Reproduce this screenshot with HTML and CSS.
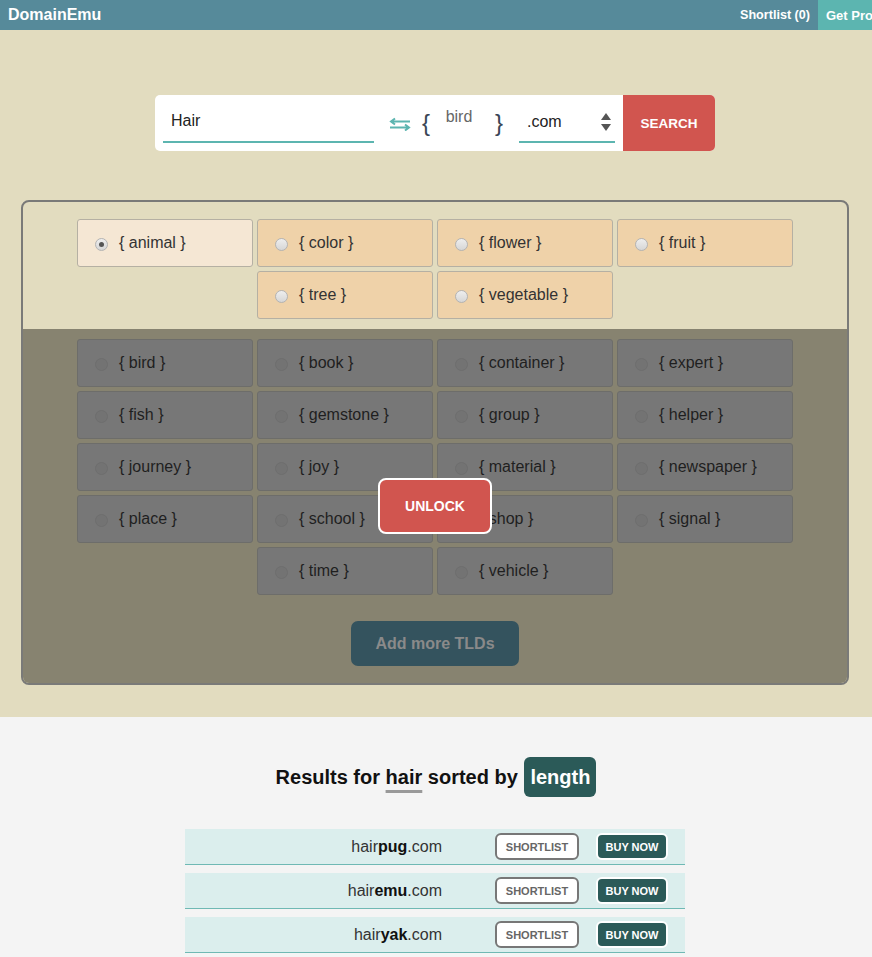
FILE: index.html
```html
<!DOCTYPE html>
<html>
<head>
    <meta charset="UTF-8">
    <link rel="stylesheet" href="styles.css">
</head>
<body>
    <div id="header">
        <div class="brand">DomainEmu</div>
        <div class="nav">
            <span class="nav-link">Shortlist (0)</span>
            <span class="pro">Get Pro</span>
        </div>
    </div>

    <div id="search-area">
        <div class="search">
            <div class="term">Hair</div>
            <div class="swap">
                <svg width="22" height="14" viewBox="0 0 22 14">
                    <path d="M21 4.5H2M6 1.5L2 4.5L6 7.5" fill="none" stroke="#5cb5b0" stroke-width="2"/>
                    <path d="M1 10.5H20M16 7.5L20 10.5L16 13.5" fill="none" stroke="#5cb5b0" stroke-width="2"/>
                </svg>
            </div>
            <div class="brace">{</div>
            <div class="word">bird</div>
            <div class="brace">}</div>
            <div class="tld">
                <span>.com</span>
                <svg width="12" height="20" viewBox="0 0 12 20">
                    <path d="M6 1L11 8H1Z" fill="#555"/>
                    <path d="M6 19L11 12H1Z" fill="#555"/>
                </svg>
            </div>
            <div class="search-btn">SEARCH</div>
        </div>

        <div class="panel">
            <div class="free">
                <div class="cats">
                    <div class="cat selected"><span class="radio checked"></span>{ animal }</div>
                    <div class="cat"><span class="radio"></span>{ color }</div>
                    <div class="cat"><span class="radio"></span>{ flower }</div>
                    <div class="cat"><span class="radio"></span>{ fruit }</div>
                    <div class="cat"><span class="radio"></span>{ tree }</div>
                    <div class="cat"><span class="radio"></span>{ vegetable }</div>
                </div>
            </div>
            <div class="locked">
                <div class="cats">
                    <div class="cat"><span class="radio"></span>{ bird }</div>
                    <div class="cat"><span class="radio"></span>{ book }</div>
                    <div class="cat"><span class="radio"></span>{ container }</div>
                    <div class="cat"><span class="radio"></span>{ expert }</div>
                    <div class="cat"><span class="radio"></span>{ fish }</div>
                    <div class="cat"><span class="radio"></span>{ gemstone }</div>
                    <div class="cat"><span class="radio"></span>{ group }</div>
                    <div class="cat"><span class="radio"></span>{ helper }</div>
                    <div class="cat"><span class="radio"></span>{ journey }</div>
                    <div class="cat"><span class="radio"></span>{ joy }</div>
                    <div class="cat"><span class="radio"></span>{ material }</div>
                    <div class="cat"><span class="radio"></span>{ newspaper }</div>
                    <div class="cat"><span class="radio"></span>{ place }</div>
                    <div class="cat"><span class="radio"></span>{ school }</div>
                    <div class="cat"><span class="radio"></span>{ shop }</div>
                    <div class="cat"><span class="radio"></span>{ signal }</div>
                    <div class="cat"><span class="radio"></span>{ time }</div>
                    <div class="cat"><span class="radio"></span>{ vehicle }</div>
                </div>
                <div class="more-btn">Add more TLDs</div>
                <div class="unlock">UNLOCK</div>
            </div>
        </div>
    </div>

    <div id="results">
        <h2>Results for <span class="q">hair</span> sorted by <span class="sort">length</span></h2>
        <div class="row">
            <div class="domain">hair<b>pug</b>.com</div>
            <div class="shortlist-btn">SHORTLIST</div>
            <div class="buy-btn">BUY NOW</div>
        </div>
        <div class="row">
            <div class="domain">hair<b>emu</b>.com</div>
            <div class="shortlist-btn">SHORTLIST</div>
            <div class="buy-btn">BUY NOW</div>
        </div>
        <div class="row">
            <div class="domain">hair<b>yak</b>.com</div>
            <div class="shortlist-btn">SHORTLIST</div>
            <div class="buy-btn">BUY NOW</div>
        </div>
    </div>
</body>
</html>
```

FILE: styles.css
```css
body {
    margin: 0;
    font-family: "Liberation Sans", Arial, sans-serif;
    background-color: #f4f4f4;
    color: #333;
}
#header {
    height: 30px;
    background-color: #568a9a;
    display: flex;
    justify-content: space-between;
    align-items: center;
    overflow: hidden;
    color: white;
    font-weight: bold;
}
.brand {
    font-size: 16px;
    padding-left: 8px;
}
.nav {
    display: flex;
    align-items: center;
    height: 100%;
    font-size: 12.6px;
}
.nav-link {
    margin-right: 8px;
}
.pro {
    background-color: #5cb5b0;
    height: 100%;
    display: flex;
    align-items: center;
    padding-left: 8px;
    width: 46px;
    white-space: nowrap;
    font-size: 13px;
}
#search-area {
    background-color: #e2dcbf;
    padding: 65px 23px 32px 21px;
}
.search {
    width: 560px;
    height: 56px;
    margin: 0 auto 49px;
    background: white;
    border-radius: 5px;
    display: flex;
    align-items: stretch;
}
.term {
    width: 203px;
    margin: 0 0 8px 8px;
    padding: 0 0 11px 8px;
    border-bottom: 2px solid #5cb5b0;
    display: flex;
    align-items: flex-end;
    font-size: 16px;
    color: #222;
}
.swap {
    margin-left: 15px;
    display: flex;
    align-items: center;
    padding-top: 2px;
}
.brace {
    font-size: 24px;
    color: #3a4656;
    display: flex;
    align-items: center;
    margin-left: 11px;
    padding-bottom: 1px;
}
.word {
    width: 50px;
    text-align: center;
    font-size: 16px;
    color: #666;
    padding-top: 13px;
    margin-left: 4px;
}
.tld {
    width: 96px;
    box-sizing: border-box;
    margin: 0 8px 8px 16px;
    padding: 0 3px 9px 8px;
    border-bottom: 2px solid #5cb5b0;
    display: flex;
    align-items: flex-end;
    justify-content: space-between;
    font-size: 16px;
    color: #222;
}
.tld span {
    padding-bottom: 1px;
}
.search-btn {
    width: 92px;
    background-color: #d1554f;
    color: white;
    font-weight: bold;
    font-size: 13.5px;
    display: flex;
    justify-content: center;
    align-items: center;
    border-radius: 0 5px 5px 0;
    margin-left: auto;
}
.panel {
    border: 2px solid #7a7a78;
    border-radius: 8px;
    overflow: hidden;
}
.free {
    padding: 17px 0 10px;
}
.locked {
    background-color: #878370;
    padding: 10px 0 17px;
    position: relative;
    display: flex;
    flex-direction: column;
    align-items: center;
}
.cats {
    width: 716px;
    margin: 0 auto;
    display: flex;
    flex-wrap: wrap;
    justify-content: center;
    gap: 4px;
}
.cat {
    width: 176px;
    height: 48px;
    box-sizing: border-box;
    border: 1px solid #b5b0a3;
    border-radius: 3px;
    background-color: #efd2a9;
    display: flex;
    align-items: center;
    padding-left: 17px;
    font-size: 16px;
    color: #333;
}
.cat.selected {
    background-color: #f5e7d4;
}
.radio {
    width: 11px;
    height: 11px;
    border-radius: 50%;
    border: 1px solid #b3b3b3;
    background: linear-gradient(#eee, #d6d6d6);
    margin-right: 11px;
    position: relative;
    top: 1px;
}
.radio.checked::after {
    content: "";
    position: absolute;
    left: 3px;
    top: 3px;
    width: 5px;
    height: 5px;
    border-radius: 50%;
    background: #555;
}
.locked .cat {
    background-color: #777777;
    border-color: #6d6d6a;
    color: #1f1f1f;
}
.locked .radio {
    background: #737373;
    border-color: #6e6e6e;
}
.more-btn {
    margin-top: 26px;
    width: 168px;
    height: 45px;
    border-radius: 7px;
    background-color: #34535e;
    color: #8a8a8a;
    font-weight: bold;
    font-size: 16px;
    display: flex;
    justify-content: center;
    align-items: center;
}
.unlock {
    position: absolute;
    left: 50%;
    top: 50%;
    transform: translate(-50%, -50%);
    width: 110px;
    height: 52px;
    border: 2px solid white;
    border-radius: 8px;
    background-color: #d1554f;
    color: white;
    font-weight: bold;
    font-size: 14px;
    display: flex;
    justify-content: center;
    align-items: center;
}
#results {
    padding-top: 40px;
}
#results h2 {
    margin: 0 0 32px;
    text-align: center;
    font-size: 20px;
    color: #111;
    line-height: 40px;
}
.q {
    text-decoration: underline;
    text-decoration-color: #999;
    text-decoration-thickness: 3px;
    text-underline-offset: 6px;
}
.sort {
    display: inline-block;
    background-color: #2b5a58;
    color: white;
    border-radius: 6px;
    padding: 0 6px;
    margin-left: 1px;
}
.row {
    width: 500px;
    height: 35px;
    margin: 0 auto 8px;
    background-color: #dbeeed;
    border-bottom: 1px solid #6fb9b4;
    display: flex;
    align-items: center;
    position: relative;
    left: -1px;
}
.domain {
    width: 257px;
    text-align: right;
    font-size: 16px;
    color: #333;
}
.domain b {
    color: #111;
}
.shortlist-btn {
    margin-left: 53px;
    width: 84px;
    height: 27px;
    box-sizing: border-box;
    border: 2px solid #777;
    border-radius: 6px;
    background: white;
    color: #666;
    font-weight: bold;
    font-size: 11px;
    display: flex;
    justify-content: center;
    align-items: center;
}
.buy-btn {
    margin-left: 17px;
    width: 72px;
    height: 27px;
    box-sizing: border-box;
    border: 2px solid white;
    border-radius: 6px;
    background-color: #2b5a58;
    color: white;
    font-weight: bold;
    font-size: 11px;
    display: flex;
    justify-content: center;
    align-items: center;
}
```
